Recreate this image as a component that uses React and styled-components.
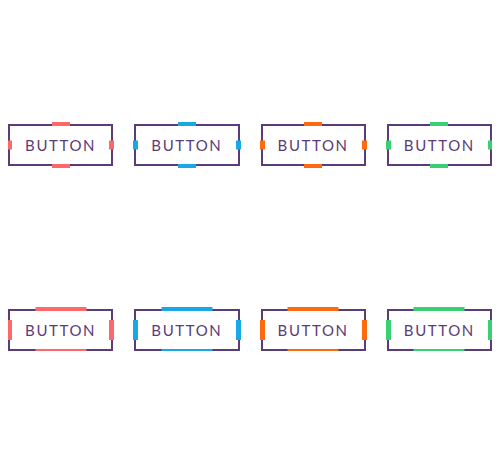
import React from 'react'
import styled, { createGlobalStyle } from 'styled-components'

const GlobalStyle = createGlobalStyle`
  body {
    margin: 8px;
    background: #ffffff;
    font-family: Lato, "Open Sans", sans-serif;
  }
`

const Page = styled.div`
  display: flex;
  flex-direction: column;
  gap: 143px;
  padding-top: 116px;
`

const Row = styled.div`
  display: flex;
  gap: 21px;
`

const Button = styled.button`
  position: relative;
  box-sizing: border-box;
  width: 106px;
  height: 42px;
  padding: 0;
  display: flex;
  align-items: center;
  justify-content: center;
  background: transparent;
  border: 2px solid #5b3b78;
  color: #5b3b78;
  font-family: Lato, "Open Sans", sans-serif;
  font-size: 15px;
  letter-spacing: 1.6px;
  cursor: pointer;

  &::before {
    content: '';
    position: absolute;
    top: -4px;
    bottom: -4px;
    left: 50%;
    width: ${props => props.$open ? '51px' : '18px'};
    transform: translateX(-50%);
    border-top: 4px solid ${props => props.$color};
    border-bottom: 4px solid ${props => props.$color};
    box-sizing: border-box;
    transition: width 0.3s ease;
  }

  &::after {
    content: '';
    position: absolute;
    left: -3px;
    right: -3px;
    top: 50%;
    height: ${props => props.$open ? '20px' : '9px'};
    transform: translateY(-50%);
    border-left: 5px solid ${props => props.$color};
    border-right: 5px solid ${props => props.$color};
    box-sizing: border-box;
    transition: height 0.3s ease;
  }
`

const colors = ['#ff6868', '#19a8e6', '#fb6b12', '#38d070']

const App = () => {
  return (
    <>
      <GlobalStyle />
      <Page>
        <Row>
          {colors.map(c => (
            <Button key={c} $color={c}>BUTTON</Button>
          ))}
        </Row>
        <Row>
          {colors.map(c => (
            <Button key={c} $color={c} $open>BUTTON</Button>
          ))}
        </Row>
      </Page>
    </>
  )
}

export default App
